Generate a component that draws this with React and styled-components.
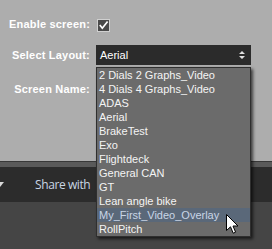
import React from "react";
import styled, { createGlobalStyle } from "styled-components";

const Global = createGlobalStyle`
  html, body { margin: 0; padding: 0; }
  body { width: 272px; height: 249px; overflow: hidden; background: #454545; font-family: "Liberation Sans", Arial, sans-serif; }
`;

const Page = styled.div`
  width: 272px;
  height: 249px;
  display: flex;
  flex-direction: column;
  position: relative;
  overflow: hidden;
`;

const Panel = styled.div`
  height: 161px;
  background: #adadad;
  padding-top: 14px;
  box-sizing: border-box;
  display: flex;
  flex-direction: column;
`;

const Row = styled.div`
  display: grid;
  grid-template-columns: 90px 1fr;
  column-gap: 6px;
  align-items: center;
  height: 20px;
  margin-top: ${(p) => p.$mt || 0}px;
`;

const Label = styled.span`
  text-align: right;
  font-weight: bold;
  font-size: 11px;
  letter-spacing: 0.2px;
  color: #ffffff;
  white-space: nowrap;
`;

const Check = styled.span`
  width: 13px;
  height: 13px;
  margin-left: 1px;
  display: block;
`;

const SelectWrap = styled.div`
  position: relative;
  width: 155px;
  height: 20px;
`;

const SelectBox = styled.div`
  height: 20px;
  background: #2b2b2b;
  color: #ffffff;
  font-size: 11px;
  display: flex;
  align-items: center;
  justify-content: space-between;
  padding: 0 6px 0 4px;
  box-sizing: border-box;
`;

const List = styled.div`
  position: absolute;
  left: 0;
  top: 22px;
  width: 155px;
  box-sizing: border-box;
  background: #6b6b6b;
  border: 1px solid #2f2f2f;
  box-shadow: 2px 2px 3px rgba(0, 0, 0, 0.65);
  z-index: 5;
`;

const Item = styled.div`
  height: 14px;
  line-height: 14px;
  font-size: 11px;
  padding-left: 2px;
  color: ${(p) => (p.$active ? "#c9d5e6" : "#f4f4f4")};
  background: ${(p) => (p.$active ? "#5a6879" : "transparent")};
  white-space: nowrap;
`;

const Strip = styled.div`
  height: 6px;
  background: #5a5a5a;
  border-top: 1px solid #383838;
  box-sizing: border-box;
`;

const Toolbar = styled.div`
  height: 35px;
  background: #2c2c2c;
  display: flex;
  align-items: center;
  gap: 31px;
`;

const Caret = styled.span`
  width: 0;
  height: 0;
  border-left: 4px solid transparent;
  border-right: 4px solid transparent;
  border-top: 5px solid #d8d8d8;
  margin-left: -4px;
`;

const Share = styled.span`
  font-family: "Open Sans", sans-serif;
  font-size: 12px;
  letter-spacing: -0.4px;
  color: #c9d6e4;
`;

const Bottom = styled.div`
  flex: 1;
  background: #454545;
`;

const Cursor = styled.svg`
  position: absolute;
  left: 226px;
  top: 214px;
  z-index: 10;
`;

const items = [
  "2 Dials 2 Graphs_Video",
  "4 Dials 4 Graphs_Video",
  "ADAS",
  "Aerial",
  "BrakeTest",
  "Exo",
  "Flightdeck",
  "General CAN",
  "GT",
  "Lean angle bike",
  "My_First_Video_Overlay",
  "RollPitch",
];

export default function App() {
  return (
    <Page>
      <Global />
      <Panel>
        <Row>
          <Label>Enable screen:</Label>
          <Check>
            <svg width="13" height="13" viewBox="0 0 13 13">
              <rect x="0.5" y="0.5" width="12" height="12" fill="#4a4a4a" stroke="#d0d0d0" />
              <path d="M2.8 6 L5.3 9.2 L10.6 2.4" fill="none" stroke="#ffffff" strokeWidth="1.7" />
            </svg>
          </Check>
        </Row>
        <Row $mt={11}>
          <Label>Select Layout:</Label>
          <SelectWrap>
            <SelectBox>
              <span>Aerial</span>
              <svg width="6" height="8" viewBox="0 0 6 8">
                <path d="M0 3 L3 0 L6 3 Z M0 5 L3 8 L6 5 Z" fill="#e0e0e0" />
              </svg>
            </SelectBox>
            <List>
              {items.map((t) => (
                <Item key={t} $active={t === "My_First_Video_Overlay"}>
                  {t}
                </Item>
              ))}
            </List>
          </SelectWrap>
        </Row>
        <Row $mt={14}>
          <Label>Screen Name:</Label>
          <span />
        </Row>
      </Panel>
      <Strip />
      <Toolbar>
        <Caret />
        <Share>Share with</Share>
      </Toolbar>
      <Bottom />
      <Cursor width="13" height="21" viewBox="0 0 13 21">
        <path d="M0.5 0.5 L0.5 16.5 L4.5 12.8 L7.2 19.2 L9.6 18.2 L7 12 L12 12 Z" fill="#ffffff" stroke="#000000" strokeWidth="1" />
      </Cursor>
    </Page>
  );
}
